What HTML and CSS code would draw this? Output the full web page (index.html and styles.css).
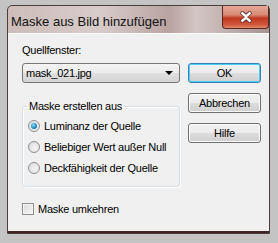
FILE: index.html
```html
<!DOCTYPE html>
<html>
<head>
<meta charset="utf-8">
<link rel="stylesheet" href="styles.css">
</head>
<body>
<div class="frame">
  <div class="window">
    <div class="titlebar">
      <span class="title">Maske aus Bild hinzufügen</span>
      <div class="close">
        <svg width="16" height="12" viewBox="0 0 16 12">
          <path d="M3 1 L8 5 L13 1 M3 11 L8 7 L13 11" fill="none" stroke="#5a2a22" stroke-width="4"/>
          <path d="M3.5 1.5 L8 5.5 L12.5 1.5 M3.5 10.5 L8 6.5 L12.5 10.5" fill="none" stroke="#ffffff" stroke-width="2.4"/>
        </svg>
      </div>
    </div>
    <div class="client">
      <div class="main">
        <div class="left">
          <div class="lbl">Quellfenster:</div>
          <div class="combo"><span>mask_021.jpg</span><span class="arrow"></span></div>
          <fieldset class="group">
            <legend>Maske erstellen aus</legend>
            <div class="radio"><span class="dot on"></span>Luminanz der Quelle</div>
            <div class="radio"><span class="dot"></span>Beliebiger Wert außer Null</div>
            <div class="radio"><span class="dot"></span>Deckfähigkeit der Quelle</div>
          </fieldset>
        </div>
        <div class="buttons">
          <div class="btn default">OK</div>
          <div class="btn">Abbrechen</div>
          <div class="btn">Hilfe</div>
        </div>
      </div>
      <div class="check"><span class="box"></span>Maske umkehren</div>
    </div>
  </div>
</div>
</body>
</html>
```
FILE: styles.css
```css
* { box-sizing: border-box; }
html, body { margin: 0; padding: 0; }
body { font-family: "Liberation Sans", Arial, sans-serif; font-size: 11px; color: #000; }
.frame {
  width: 278px; height: 243px;
  background: #c4c4c4;
  padding: 5px 8px 0 7px;
}
.window {
  width: 263px; height: 229px;
  border: 1px solid #4e3c3c;
  border-radius: 5px 5px 0 0;
  background: linear-gradient(90deg, #cdbcba 0%, #d8cccb 35%, #b9a3a1 62%, #d3c6c4 72%, #a99391 100%);
  display: flex; flex-direction: column;
}
.titlebar {
  height: 27px; flex: none;
  display: flex; align-items: flex-start; justify-content: space-between;
}
.title {
  font-size: 13px; margin: 8px 0 0 3px; color: #111;
}
.close {
  width: 47px; height: 23px;
  border: 1px solid #5a2a22; border-top: none;
  border-radius: 0 0 4px 4px;
  background: linear-gradient(180deg, #e6a898 0%, #d88a76 40%, #c0381e 55%, #d0583c 85%, #e08a6a 100%);
  display: flex; align-items: center; justify-content: center;
}
.close svg { display: block; }
.client {
  flex: 1;
  background: #f0f0f0;
  border-top: 1px solid #ffffff;
  border-bottom: 2px solid #3e2626;
  padding: 10px 7px 0 14px;
  display: flex; flex-direction: column;
  letter-spacing: -0.25px;
}
.main { display: flex; gap: 8px; }
.left { width: 158px; display: flex; flex-direction: column; }
.lbl { line-height: 13px; height: 13px; }
.combo {
  margin-top: 6px;
  height: 20px;
  border: 1px solid #767676; border-radius: 3px;
  background: linear-gradient(180deg, #f4f4f4 0%, #ececec 50%, #dfdfdf 51%, #d4d4d4 100%);
  display: flex; align-items: center; justify-content: space-between;
  padding: 0 6px 0 3px;
}
.arrow {
  width: 0; height: 0;
  border-left: 4px solid transparent; border-right: 4px solid transparent;
  border-top: 4px solid #000;
}
.group {
  margin: 17px 0 0 0;
  padding: 2px 0 8px 5px;
  border: 1px solid #d5dfe5; border-radius: 3px;
  box-shadow: inset 1px 1px 0 #fff, 1px 1px 0 #fff;
}
.group legend { padding: 0 2px; margin-left: -1px; line-height: 13px; }
.radio { display: flex; align-items: center; height: 21px; }
.dot {
  width: 12px; height: 12px; border-radius: 50%;
  border: 1px solid #8e8f8f;
  background: radial-gradient(circle at 60% 60%, #f4f4f4 0%, #d8d8d8 100%);
  margin-right: 4px; position: relative; flex: none;
}
.dot.on::after {
  content: ""; position: absolute; left: 2px; top: 2px;
  width: 6px; height: 6px; border-radius: 50%;
  background: radial-gradient(circle at 40% 35%, #8ee0ff 0%, #1b7fc0 60%, #0b4f8a 100%);
}
.buttons { width: 73px; display: flex; flex-direction: column; gap: 10px; margin-top: 19px; }
.btn {
  height: 20px;
  border: 1px solid #707070; border-radius: 3px;
  background: linear-gradient(180deg, #f2f2f2 0%, #ebebeb 50%, #dddddd 51%, #cfcfcf 100%);
  box-shadow: inset 0 0 0 1px #fcfcfc;
  display: flex; align-items: center; justify-content: center;
}
.btn.default {
  border-color: #3c7fb1;
  box-shadow: inset 0 0 0 1px #48d0f8;
}
.check { display: flex; align-items: center; margin-top: 15px; height: 13px; }
.box {
  width: 12px; height: 12px;
  border: 1px solid #8f8f8f;
  background: linear-gradient(135deg, #dcdcdc 0%, #f6f6f6 100%);
  box-shadow: inset 0 0 0 1px #f4f4f4;
  margin-right: 4px; flex: none;
}
```
